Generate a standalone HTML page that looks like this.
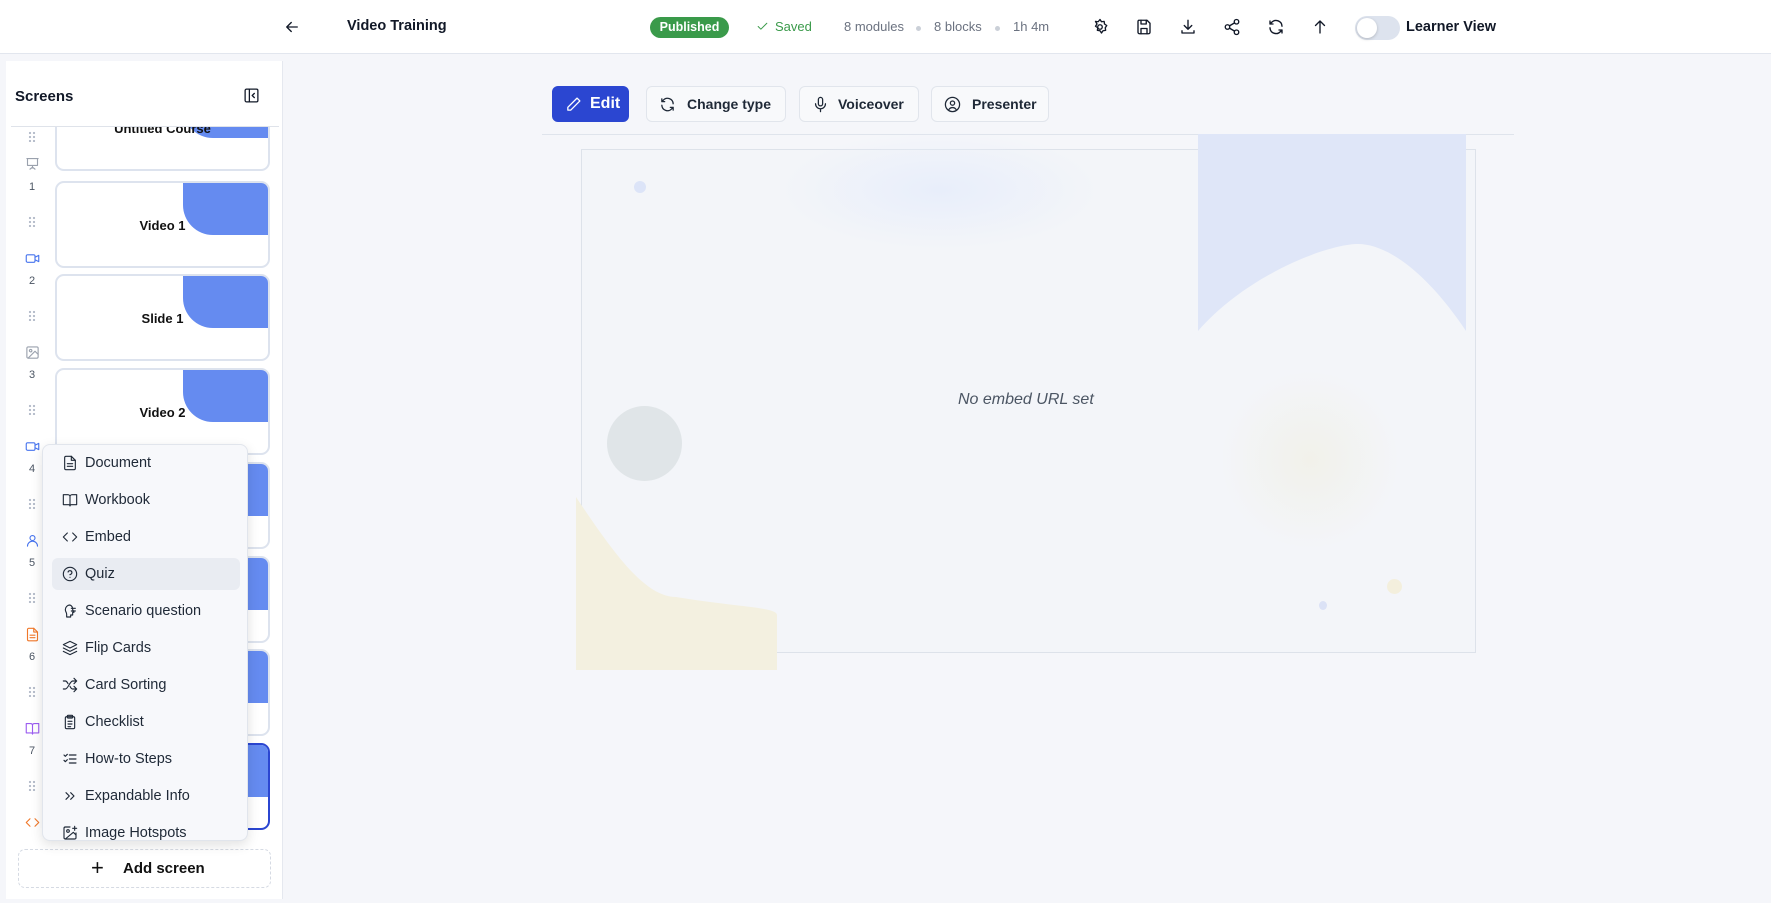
<!DOCTYPE html>
<html><head><meta charset="utf-8"><style>
*{box-sizing:border-box;margin:0;padding:0}
body{width:1771px;height:903px;overflow:hidden;background:#f5f6fa;font-family:"Liberation Sans",sans-serif;color:#111827;position:relative}
.abs{position:absolute}
.hdr{left:0;top:0;width:1771px;height:54px;background:#fff;border-bottom:1px solid #e2e6ee}
.ic{position:absolute;width:18px;height:18px}
svg{fill:none;stroke:currentColor;stroke-width:1.8;stroke-linecap:round;stroke-linejoin:round}
.side{left:6px;top:61px;width:277px;height:838px;background:#fff;border-right:1px solid #e5e8ef}
.card{position:absolute;left:55px;width:215px;height:87px;border:2px solid #dde3ee;border-radius:9px;background:#fff;overflow:hidden}
.card .bl{position:absolute;right:0;top:0;width:85px;height:52px;background:#658bf0;border-bottom-left-radius:30px}
.card .t{position:absolute;left:0;right:0;top:35px;text-align:center;font-weight:bold;font-size:13px;color:#111}
.num{position:absolute;left:27px;width:10px;text-align:center;font-size:11px;color:#4b5563}
.dots{position:absolute;left:28px;width:8px;height:11px;background:radial-gradient(circle,#b8bfcc 1.1px,transparent 1.3px) 0 0/4px 4px}
.menu{left:42px;top:444px;width:206px;height:397px;background:#f7f8fb;border:1px solid #e1e5ec;border-radius:8px;box-shadow:0 4px 12px rgba(0,0,0,.12);overflow:hidden}
.mi{position:absolute;left:9px;width:188px;height:32px;font-size:14.5px;color:#1f2937;line-height:32px;padding-left:33px;border-radius:6px}
.mi svg{position:absolute;left:10px;top:8px;width:16px;height:16px;stroke-width:1.7}
.btn{position:absolute;top:86px;height:36px;border:1px solid #e1e5ec;border-radius:6px;background:#f8f9fb;font-size:14px;font-weight:bold;color:#1f2937;line-height:34px}
.btn svg{position:absolute;top:9px;left:12px;width:17px;height:17px}
</style></head><body>
<div class="abs hdr"></div>
<svg class="ic" style="left:283px;top:18px" viewBox="0 0 24 24"><path d="M19 12H5M11 6l-6 6 6 6"/></svg>
<div class="abs" style="left:347px;top:18px;font-size:14.5px;font-weight:bold">Video Training</div>
<div class="abs" style="left:650px;top:17px;width:79px;height:21px;border-radius:11px;background:#3a9a4a;color:#fff;font-size:12.5px;font-weight:bold;text-align:center;line-height:21px">Published</div>
<svg class="ic" style="left:756px;top:20px;width:13px;height:13px;color:#3a9a4a" viewBox="0 0 24 24"><path d="M4 12l5 5L20 6"/></svg>
<div class="abs" style="left:775px;top:19px;font-size:13px;color:#3a9a4a">Saved</div>
<div class="abs" style="left:844px;top:19px;font-size:13px;color:#6b7280">8 modules</div>
<div class="abs" style="left:916px;top:26px;width:5px;height:5px;border-radius:50%;background:#cbd0d8"></div>
<div class="abs" style="left:934px;top:19px;font-size:13px;color:#6b7280">8 blocks</div>
<div class="abs" style="left:995px;top:26px;width:5px;height:5px;border-radius:50%;background:#cbd0d8"></div>
<div class="abs" style="left:1013px;top:19px;font-size:13px;color:#6b7280">1h 4m</div>
<svg class="ic" style="left:1091px;top:18px" viewBox="0 0 24 24"><circle cx="12" cy="12" r="3"/><path d="M12 2l2 3 3.5-.5.5 3.5 3 2-2 3 .5 3.5-3.5.5-2 3-2-3-3.5-.5.5-3.5-3-2 2-3L6 4.5l3.5.5z"/></svg>
<svg class="ic" style="left:1135px;top:18px" viewBox="0 0 24 24"><path d="M5 3h11l4 4v12a2 2 0 0 1-2 2H6a2 2 0 0 1-2-2V5a2 2 0 0 1 1-2z"/><path d="M8 3v5h7V3M8 21v-7h8v7"/></svg>
<svg class="ic" style="left:1179px;top:18px" viewBox="0 0 24 24"><path d="M12 3v12M7 10l5 5 5-5M4 17v3h16v-3"/></svg>
<svg class="ic" style="left:1223px;top:18px" viewBox="0 0 24 24"><circle cx="18" cy="5" r="3"/><circle cx="6" cy="12" r="3"/><circle cx="18" cy="19" r="3"/><path d="M8.6 13.5l6.8 4M15.4 6.5l-6.8 4"/></svg>
<svg class="ic" style="left:1267px;top:18px" viewBox="0 0 24 24"><path d="M20 11A8 8 0 0 0 6 6L4 8M4 4v4h4M4 13a8 8 0 0 0 14 5l2-2M20 20v-4h-4"/></svg>
<svg class="ic" style="left:1311px;top:18px" viewBox="0 0 24 24"><path d="M12 20V4M6 10l6-6 6 6"/></svg>
<div class="abs" style="left:1355px;top:16px;width:45px;height:24px;border-radius:12px;background:#dde3ee"></div>
<div class="abs" style="left:1357px;top:18px;width:20px;height:20px;border-radius:50%;background:#fff;box-shadow:0 1px 3px rgba(0,0,0,.2)"></div>
<div class="abs" style="left:1406px;top:19px;font-size:14.5px;font-weight:bold">Learner View</div>

<div class="abs side"></div>
<div class="abs" style="left:15px;top:88px;font-size:15px;font-weight:bold">Screens</div>
<svg class="ic" style="left:243px;top:87px;width:17px;height:17px" viewBox="0 0 24 24"><rect x="3" y="3" width="18" height="18" rx="2"/><path d="M9 3v18M16 9l-3 3 3 3"/></svg>
<div class="abs" style="left:11px;top:126px;width:268px;height:1px;background:#dfe3ea"></div>
<div class="abs" style="left:0;top:127px;width:283px;height:717px;overflow:hidden">
 <div class="card" style="top:-43px"><div class="bl"></div><div class="t">Untitled Course</div></div>
 <div class="dots" style="top:4px"></div>
 <svg class="ic" style="left:25px;top:29px;width:15px;height:15px;color:#9aa1ad" viewBox="0 0 24 24"><path d="M3 4h18M4 4v11h16V4M12 15v3M8 21l4-3 4 3"/></svg>
 <div class="num" style="top:54px">1</div><div class="dots" style="top:89px"></div>
 <svg class="ic" style="left:25px;top:124px;width:15px;height:15px;color:#4774ee" viewBox="0 0 24 24"><rect x="2" y="6" width="14" height="12" rx="2"/><path d="M16 10l6-3v10l-6-3"/></svg>
 <div class="num" style="top:148px">2</div><div class="dots" style="top:183px"></div>
 <svg class="ic" style="left:25px;top:218px;width:15px;height:15px;color:#9aa1ad" viewBox="0 0 24 24"><rect x="3" y="3" width="18" height="18" rx="2"/><circle cx="9" cy="9" r="2"/><path d="M21 15l-5-5L5 21"/></svg>
 <div class="num" style="top:242px">3</div><div class="dots" style="top:277px"></div>
 <svg class="ic" style="left:25px;top:312px;width:15px;height:15px;color:#4774ee" viewBox="0 0 24 24"><rect x="2" y="6" width="14" height="12" rx="2"/><path d="M16 10l6-3v10l-6-3"/></svg>
 <div class="num" style="top:336px">4</div><div class="dots" style="top:371px"></div>
 <svg class="ic" style="left:25px;top:406px;width:15px;height:15px;color:#4774ee" viewBox="0 0 24 24"><circle cx="12" cy="8" r="4"/><path d="M4 21a8 8 0 0 1 16 0"/></svg>
 <div class="num" style="top:430px">5</div><div class="dots" style="top:465px"></div>
 <svg class="ic" style="left:25px;top:500px;width:15px;height:15px;color:#f0782a" viewBox="0 0 24 24"><path d="M14 2H6a2 2 0 0 0-2 2v16a2 2 0 0 0 2 2h12a2 2 0 0 0 2-2V8z"/><path d="M14 2v6h6M8 13h8M8 17h8"/></svg>
 <div class="num" style="top:524px">6</div><div class="dots" style="top:559px"></div>
 <svg class="ic" style="left:25px;top:594px;width:15px;height:15px;color:#9b5cf0" viewBox="0 0 24 24"><path d="M2 4h7a3 3 0 0 1 3 3v14a2 2 0 0 0-2-2H2zM22 4h-7a3 3 0 0 0-3 3v14a2 2 0 0 1 2-2h8z"/></svg>
 <div class="num" style="top:618px">7</div><div class="dots" style="top:653px"></div>
 <svg class="ic" style="left:25px;top:688px;width:15px;height:15px;color:#f0782a" viewBox="0 0 24 24"><path d="M8 6l-6 6 6 6M16 6l6 6-6 6"/></svg>
 <div class="card" style="top:54px"><div class="bl"></div><div class="t">Video 1</div></div>
 <div class="card" style="top:147px"><div class="bl"></div><div class="t">Slide 1</div></div>
 <div class="card" style="top:241px"><div class="bl"></div><div class="t">Video 2</div></div>
 <div class="card" style="top:335px"><div class="bl"></div></div>
 <div class="card" style="top:429px"><div class="bl"></div></div>
 <div class="card" style="top:522px"><div class="bl"></div></div>
 <div class="card" style="top:616px;border-color:#2b46d1"><div class="bl"></div></div>
</div>
<div class="abs" style="left:18px;top:849px;width:253px;height:39px;border:1px dashed #d5dae3;border-radius:7px;font-size:15px;font-weight:bold;line-height:37px;color:#111"><span style="position:absolute;left:72px;font-weight:normal;font-size:22px;top:-1px">+</span><span style="position:absolute;left:104px">Add screen</span></div>

<div class="abs menu">
 <div class="mi" style="top:2px"><svg viewBox="0 0 24 24"><path d="M14 2H6a2 2 0 0 0-2 2v16a2 2 0 0 0 2 2h12a2 2 0 0 0 2-2V8z"/><path d="M14 2v6h6M8 13h8M8 17h8"/></svg>Document</div>
 <div class="mi" style="top:39px"><svg viewBox="0 0 24 24"><path d="M2 4h7a3 3 0 0 1 3 3v14a2 2 0 0 0-2-2H2zM22 4h-7a3 3 0 0 0-3 3v14a2 2 0 0 1 2-2h8z"/></svg>Workbook</div>
 <div class="mi" style="top:76px"><svg viewBox="0 0 24 24"><path d="M8 6l-6 6 6 6M16 6l6 6-6 6"/></svg>Embed</div>
 <div class="mi" style="top:113px;background:#e9ecf2"><svg viewBox="0 0 24 24"><circle cx="12" cy="12" r="10"/><path d="M9.1 9a3 3 0 0 1 5.8 1c0 2-3 3-3 3M12 17h.01"/></svg>Quiz</div>
 <div class="mi" style="top:150px"><svg viewBox="0 0 24 24"><path d="M12 3a7 7 0 0 0-7 7c0 3 2 4 2 7v4h6v-3h3v-4h2l-2-4a7 7 0 0 0-4-7zM14 8h6M14 12h6"/></svg>Scenario question</div>
 <div class="mi" style="top:187px"><svg viewBox="0 0 24 24"><path d="M12 2L2 7l10 5 10-5zM2 12l10 5 10-5M2 17l10 5 10-5"/></svg>Flip Cards</div>
 <div class="mi" style="top:224px"><svg viewBox="0 0 24 24"><path d="M2 18h3c4 0 7-12 11-12h6M18 2l4 4-4 4M2 6h3c2 0 3 2 4 4M22 18h-6c-2 0-3-2-4-4M18 14l4 4-4 4"/></svg>Card Sorting</div>
 <div class="mi" style="top:261px"><svg viewBox="0 0 24 24"><rect x="5" y="4" width="14" height="18" rx="2"/><rect x="8" y="2" width="8" height="4" rx="1"/><path d="M9 11h6M9 15h6M9 19h4"/></svg>Checklist</div>
 <div class="mi" style="top:298px"><svg viewBox="0 0 24 24"><path d="M3 6l2 2 3-3M3 14l2 2 3-3M11 6h10M11 12h10M11 18h10"/></svg>How-to Steps</div>
 <div class="mi" style="top:335px"><svg viewBox="0 0 24 24"><path d="M6 7l5 5-5 5M13 7l5 5-5 5"/></svg>Expandable Info</div>
 <div class="mi" style="top:372px"><svg viewBox="0 0 24 24"><path d="M21 12v7a2 2 0 0 1-2 2H5a2 2 0 0 1-2-2V5a2 2 0 0 1 2-2h7M16 5h6M19 2v6"/><circle cx="9" cy="9" r="2"/><path d="M21 15l-4-4L5 21"/></svg>Image Hotspots</div>
</div>

<div class="btn" style="left:552px;width:77px;background:#2b46d1;border-color:#2b46d1;color:#fff;font-size:16px"><svg viewBox="0 0 24 24"><path d="M17 3l4 4L8 20H4v-4z"/></svg><span style="position:absolute;left:37px">Edit</span></div>
<div class="btn" style="left:646px;width:140px"><svg viewBox="0 0 24 24"><path d="M20 11A8 8 0 0 0 6 6L4 8M4 4v4h4M4 13a8 8 0 0 0 14 5l2-2M20 20v-4h-4"/></svg><span style="position:absolute;left:40px">Change type</span></div>
<div class="btn" style="left:799px;width:120px"><svg viewBox="0 0 24 24"><rect x="9" y="2" width="6" height="12" rx="3"/><path d="M5 11a7 7 0 0 0 14 0M12 18v4"/></svg><span style="position:absolute;left:38px">Voiceover</span></div>
<div class="btn" style="left:931px;width:118px"><svg viewBox="0 0 24 24"><circle cx="12" cy="12" r="10"/><circle cx="12" cy="10" r="3"/><path d="M7 19a6 6 0 0 1 10 0"/></svg><span style="position:absolute;left:40px">Presenter</span></div>
<div class="abs" style="left:542px;top:134px;width:972px;height:1px;background:#dfe4ec"></div>

<div class="abs" style="left:581px;top:149px;width:895px;height:504px;border:1px solid #dde2ea;background:#f3f5f9"></div>
<div class="abs" style="left:780px;top:130px;width:320px;height:120px;border-radius:50%;background:radial-gradient(ellipse,#e8eefa 0%,rgba(240,244,251,0) 70%)"></div>
<svg class="abs" style="left:1198px;top:134px;width:268px;height:197px" viewBox="0 0 268 197"><path d="M0 0H268V197C230 140 190 110 160 110S50 140 0 197Z" fill="#dfe6f8" stroke="none"/></svg>
<div class="abs" style="left:1220px;top:370px;width:180px;height:180px;border-radius:50%;background:radial-gradient(circle,#f2f1ea 0%,rgba(243,245,249,0) 70%)"></div>
<div class="abs" style="left:634px;top:181px;width:12px;height:12px;border-radius:50%;background:#dce4f8"></div>
<div class="abs" style="left:607px;top:406px;width:75px;height:75px;border-radius:50%;background:#e0e5e8"></div>
<svg class="abs" style="left:576px;top:497px;width:201px;height:173px" viewBox="0 0 201 173"><path d="M0 0C40 60 70 100 100 100C160 110 201 110 201 118V173H0Z" fill="#f3f0e0" stroke="none"/></svg>
<div class="abs" style="left:1387px;top:579px;width:15px;height:15px;border-radius:50%;background:#f3efdd"></div>
<div class="abs" style="left:1319px;top:601px;width:8px;height:9px;border-radius:50%;background:#dbe2f6"></div>
<div class="abs" style="left:958px;top:391px;font-size:16px;font-style:italic;color:#4b5563">No embed URL set</div>
</body></html>
